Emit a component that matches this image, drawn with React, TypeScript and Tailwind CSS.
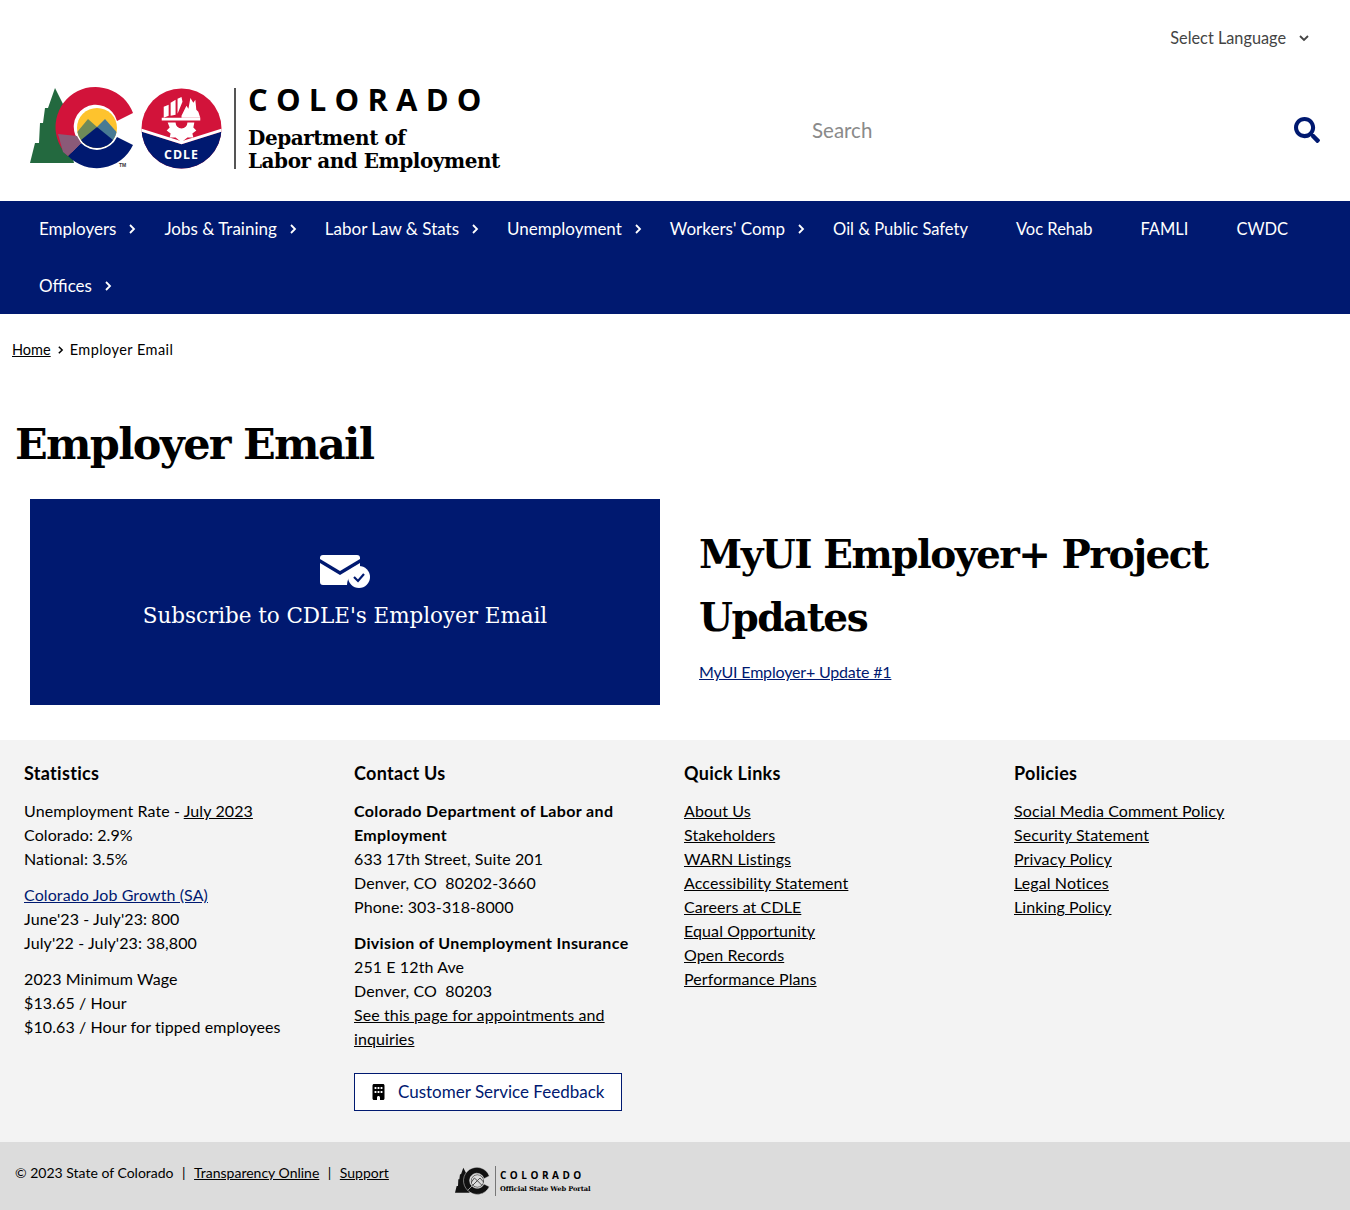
const body = 'Lato, sans-serif';
const slab = '"DejaVu Serif", serif';

function Chevron({ className = "" }: { className?: string }) {
  return (
    <svg viewBox="0 0 8 12" className={className} fill="none" stroke="currentColor" strokeWidth="1.8">
      <path d="M2 2l4 4-4 4" />
    </svg>
  );
}

function CoLogo({ mono = false, size = 108 }: { mono?: boolean; size?: number }) {
  const red = mono ? "#111" : "#d2133a";
  const blue = mono ? "#111" : "#001970";
  const green = mono ? "#111" : "#23693f";
  const clip = mono ? "coClipMono" : "coClip";
  return (
    <svg viewBox="0 0 108 84" width={size} height={(size * 84) / 108} className="block shrink-0">
      <defs>
        <clipPath id={clip}><circle cx="67" cy="42" r="20" /></clipPath>
      </defs>
      <path d="M25 2L35 22H33L38 37H36L40 60L44 77H0L5 57H9L10 37H13L15 22H18Z" fill={green} />
      <path d="M103 27A40 40 0 1 0 38 70L51 57A22 22 0 1 1 87 35Z" fill={red} stroke={mono ? "#dcdcdc" : "none"} strokeWidth={mono ? 1.5 : 0} />
      <path d="M38 70A40 40 0 0 0 103 59L87 51A22 22 0 0 1 51 57Z" fill={blue} stroke={mono ? "#dcdcdc" : "none"} strokeWidth={mono ? 1.5 : 0} />
      {!mono && <path d="M28 48L47 50L51 57L38 70L33 66Z" fill="#8a5a78" />}
      {mono ? (
        <g clipPath={`url(#${clip})`} fill="none" stroke="#333" strokeWidth="2.500">
          <circle cx="67" cy="42" r="19" />
          <path d="M46 50L58 33L67 41L75 33L90 50M48 60L67 41L86 60" />
        </g>
      ) : (
        <g clipPath={`url(#${clip})`}>
          <rect x="45" y="20" width="44" height="44" fill="#fec32d" />
          <path d="M44 50L58 33L67 41L56 64H44Z" fill="#6f8a58" />
          <path d="M67 41L75 33L90 50V64H78Z" fill="#487a93" />
          <path d="M46 58L67 41L88 58V64H46Z" fill="#001970" />
        </g>
      )}
      {!mono && <text x="89" y="81" fontSize="5" fontWeight="700" fill="#333" fontFamily='"Liberation Sans", sans-serif'>TM</text>}
    </svg>
  );
}

function CdleBadge() {
  return (
    <svg viewBox="0 0 82 82" width="81" height="81" className="block">
      <defs>
        <clipPath id="badge"><circle cx="41" cy="41" r="40.500" /></clipPath>
      </defs>
      <g clipPath="url(#badge)">
        <rect width="82" height="82" fill="#d2133a" />
        <path d="M0 44L41 57L82 44V82H0Z" fill="#001970" />
        <path d="M0 41L41 54L82 41V44L41 57L0 44Z" fill="#fff" />
        <path d="M23 19L28 17V28L23 30ZM30 15L35 12V27L30 28ZM37 11L41 9L42 14L37 26Z" fill="#fff" />
        <path d="M41 28L46 18L48 21L50 10L53 15L55 12L56 22L58 24L60 30H41Z" fill="#fff" />
        <path d="M21 30H60V33H21Z" fill="#fff" />
        <path d="M27 35H35A6 6 0 0 0 47 35H54L53 40L56 43L52 46L53 50L47 50L41 55L35 50L29 50L30 46L26 43L29 40Z" fill="#fff" />
        <text x="41" y="72" textAnchor="middle" fontSize="12.500" fontWeight="700" letterSpacing="1" fill="#fff" fontFamily='"Open Sans", sans-serif'>CDLE</text>
      </g>
    </svg>
  );
}

const nav: [string, boolean][] = [
  ["Employers", true],
  ["Jobs & Training", true],
  ["Labor Law & Stats", true],
  ["Unemployment", true],
  ["Workers' Comp", true],
  ["Oil & Public Safety", false],
  ["Voc Rehab", false],
  ["FAMLI", false],
  ["CWDC", false],
  ["Offices", true],
];

function A({ children, blue = false }: { children: React.ReactNode; blue?: boolean }) {
  return <a href="#" className={`underline ${blue ? "text-[#001970]" : "text-black"}`}>{children}</a>;
}

function H3({ children }: { children: React.ReactNode }) {
  return <h3 className="text-[18px] leading-[26px] font-bold mb-[13px] tracking-[0.3px]">{children}</h3>;
}

function B({ children }: { children: React.ReactNode }) {
  return <b className="tracking-[0.35px]">{children}</b>;
}

export default function App() {
  return (
    <div className="bg-white text-black text-[16px] leading-6" style={{ fontFamily: body }}>
      <header className="h-[201px] flex flex-col">
        <div className="flex justify-end items-center h-[77px] pr-[40px] pb-[2px]">
          <span className="text-[#444] text-[16.300px]">Select Language</span>
          <Chevron className="w-[12px] h-[12px] ml-[12px] rotate-90 text-[#444]" />
        </div>
        <div className="flex items-start justify-between">
          <div className="flex items-start pl-[30px] pt-[9px]">
            <CoLogo />
            <div className="ml-[3px] mt-[2px]"><CdleBadge /></div>
            <div className="w-[2px] h-[81px] bg-[#555] ml-[12px] mt-[2px]" />
            <div className="ml-[12px] -mt-[5px] text-black">
              <div className="text-[31px] leading-[36px] font-bold tracking-[8.200px]" style={{ fontFamily: '"Open Sans", sans-serif' }}>COLORADO</div>
              <div className="text-[20px] leading-[23px] font-bold mt-[10px] tracking-[-0.450px]" style={{ fontFamily: slab }}>Department of<br />Labor and Employment</div>
            </div>
          </div>
          <div className="flex items-center w-[538px] pr-[30px] pt-[40px] justify-between">
            <span className="text-[20.500px] text-[#8a8a8a]">Search</span>
            <svg viewBox="0 0 512 512" width="26" height="26" fill="#001970">
              <path d="M505 442.700L405.300 343c-4.500-4.500-10.600-7-17-7H372c27.600-35.300 44-79.700 44-128C416 93.100 322.900 0 208 0S0 93.100 0 208s93.100 208 208 208c48.300 0 92.700-16.400 128-44v16.300c0 6.400 2.500 12.500 7 17l99.700 99.700c9.400 9.400 24.600 9.400 33.900 0l28.300-28.300c9.400-9.400 9.400-24.600.1-34zM208 336c-70.700 0-128-57.200-128-128 0-70.700 57.200-128 128-128 70.700 0 128 57.200 128 128 0 70.700-57.200 128-128 128z" />
            </svg>
          </div>
        </div>
      </header>

      <nav className="bg-[#001970] text-white pl-[39px] flex flex-wrap h-[113px] text-[17px]">
        {nav.map(([t, c]) => (
          <a key={t} href="#" className={`h-[56.500px] flex items-center ${c ? "" : "pr-12 text-[16.500px]"}`}>
            <span>{t}</span>
            {c && <Chevron className="w-[8px] h-[12px] ml-3 mr-7" />}
          </a>
        ))}
      </nav>

      <div className="pl-[12px] pt-[24px] h-[102px] flex items-start text-[14.500px]">
        <A>Home</A>
        <Chevron className="w-[7px] h-[10px] mx-[6px] mt-[7px]" />
        <span className="tracking-[0.450px]">Employer Email</span>
      </div>

      <h1 className="pl-[15px] text-[43px] leading-[56px] font-bold tracking-[-1.700px]" style={{ fontFamily: slab }}>Employer Email</h1>

      <main className="flex pl-[30px] pt-[27px] h-[268px]">
        <a href="#" className="w-[630px] h-[206px] bg-[#001970] text-white flex flex-col items-center pt-[56px]">
          <svg viewBox="0 0 50 34" width="50" height="34" className="block">
            <path d="M3 0h34a3 3 0 0 1 3 3v1L20 16 0 4V3a3 3 0 0 1 3-3z" fill="#fff" />
            <path d="M0 8l20 12 20-12v9a13 13 0 0 0-13 13H3a3 3 0 0 1-3-3z" fill="#fff" />
            <circle cx="39" cy="22" r="11" fill="#fff" />
            <path d="M34 22l4 4 6-7" fill="none" stroke="#001970" strokeWidth="2.200" />
          </svg>
          <span className="text-[21.500px] leading-[30px] mt-[12px] tracking-[-0.050px]" style={{ fontFamily: slab }}>Subscribe to CDLE's Employer Email</span>
        </a>
        <div className="pl-[39px] pt-[24px]">
          <h2 className="text-[39px] leading-[63px] font-bold w-[600px] tracking-[-1.500px]" style={{ fontFamily: slab }}>MyUI Employer+ Project Updates</h2>
          <div className="mt-[11px] tracking-[-0.180px]"><A blue>MyUI Employer+ Update #1</A></div>
        </div>
      </main>

      <footer className="bg-[#f3f3f3] h-[402px] pl-[24px] pt-[20px] grid grid-cols-[330px_330px_330px_330px] tracking-[0.100px]">
        <section className="pr-[30px]">
          <H3>Statistics</H3>
          <p className="mb-[12px]">Unemployment Rate - <A>July 2023</A><br />Colorado: 2.9%<br />National: 3.5%</p>
          <p className="mb-[12px]"><A blue>Colorado Job Growth (SA)</A><br />June'23 - July'23: 800<br />July'22 - July'23: 38,800</p>
          <p>2023 Minimum Wage<br />$13.65 / Hour<br />$10.63 / Hour for tipped employees</p>
        </section>
        <section className="pr-[30px]">
          <H3>Contact Us</H3>
          <p className="mb-[12px]"><B>Colorado Department of Labor and Employment</B><br />633 17th Street, Suite 201<br />Denver, CO&nbsp; 80202-3660<br />Phone: 303-318-8000</p>
          <p className="mb-[22px]"><B>Division of Unemployment Insurance</B><br />251 E 12th Ave<br />Denver, CO&nbsp; 80203<br /><A>See this page for appointments and inquiries</A></p>
          <a href="#" className="w-[268px] h-[38px] border border-[#001970] bg-white text-[#001970] flex items-center pl-[17px] text-[17px] tracking-normal">
            <svg viewBox="0 0 384 512" width="13" height="16" fill="#000" className="mr-[13px] shrink-0">
              <path d="M48 0C21.500 0 0 21.500 0 48V464c0 26.500 21.500 48 48 48h96V432c0-26.500 21.500-48 48-48s48 21.500 48 48v80h96c26.500 0 48-21.500 48-48V48c0-26.500-21.500-48-48-48H48zM64 240c0-8.800 7.200-16 16-16h32c8.800 0 16 7.200 16 16v32c0 8.800-7.200 16-16 16H80c-8.800 0-16-7.200-16-16V240zm112-16h32c8.800 0 16 7.200 16 16v32c0 8.800-7.200 16-16 16H176c-8.800 0-16-7.200-16-16V240c0-8.800 7.200-16 16-16zm80 16c0-8.800 7.200-16 16-16h32c8.800 0 16 7.200 16 16v32c0 8.800-7.200 16-16 16H272c-8.800 0-16-7.200-16-16V240zM80 96h32c8.800 0 16 7.200 16 16v32c0 8.800-7.200 16-16 16H80c-8.800 0-16-7.200-16-16V112c0-8.800 7.200-16 16-16zm80 16c0-8.800 7.200-16 16-16h32c8.800 0 16 7.200 16 16v32c0 8.800-7.200 16-16 16H176c-8.800 0-16-7.200-16-16V112zM272 96h32c8.800 0 16 7.200 16 16v32c0 8.800-7.200 16-16 16H272c-8.800 0-16-7.200-16-16V112c0-8.800 7.200-16 16-16z" />
            </svg>
            Customer Service Feedback
          </a>
        </section>
        <section>
          <H3>Quick Links</H3>
          <ul>
            {["About Us", "Stakeholders", "WARN Listings", "Accessibility Statement", "Careers at CDLE", "Equal Opportunity", "Open Records", "Performance Plans"].map((t) => <li key={t}><A>{t}</A></li>)}
          </ul>
        </section>
        <section>
          <H3>Policies</H3>
          <ul>
            {["Social Media Comment Policy", "Security Statement", "Privacy Policy", "Legal Notices", "Linking Policy"].map((t) => <li key={t}><A>{t}</A></li>)}
          </ul>
        </section>
      </footer>

      <div className="bg-[#dcdcdc] h-[68px] pl-[15px] flex items-start text-[14px]">
        <div className="pt-[19px] w-[440px] whitespace-pre">© 2023 State of Colorado<span className="mx-[8.500px]">|</span><A>Transparency Online</A><span className="mx-[8.500px]">|</span><A>Support</A></div>
        <div className="flex items-center pt-[24px]">
          <CoLogo mono size={36} />
          <div className="w-px h-[30px] bg-[#777] mx-[4px]" />
          <div className="text-black">
            <div className="text-[10px] leading-[12px] font-bold tracking-[3.500px]" style={{ fontFamily: '"Open Sans", sans-serif' }}>COLORADO</div>
            <div className="text-[6.700px] leading-[10px] font-bold tracking-[-0.100px] mt-[3px]" style={{ fontFamily: slab }}>Official State Web Portal</div>
          </div>
        </div>
      </div>
    </div>
  );
}
